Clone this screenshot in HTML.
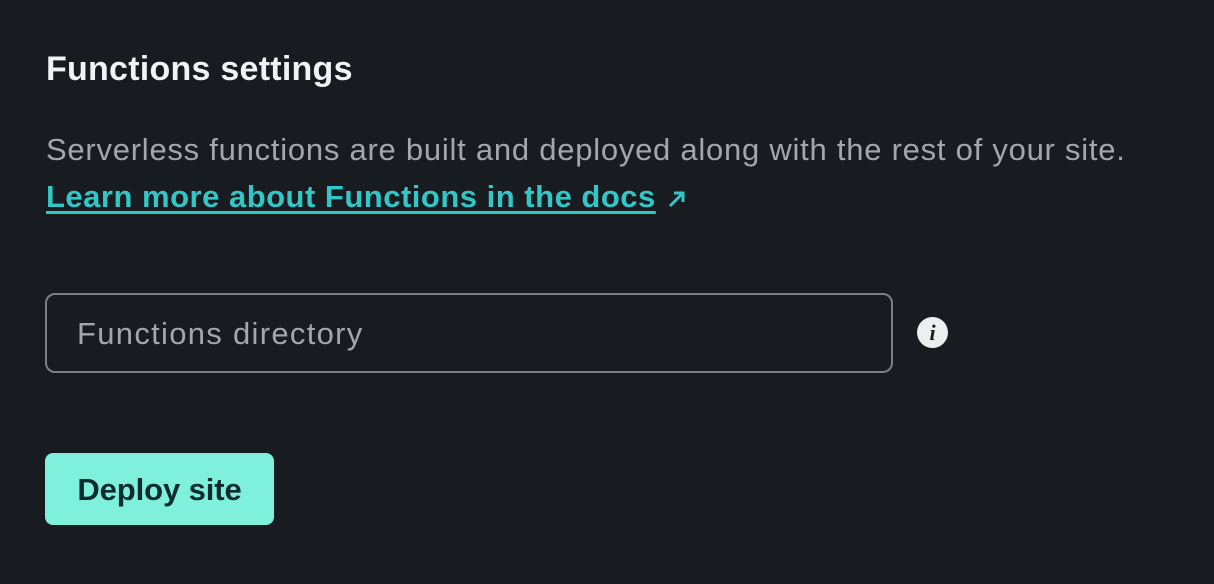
<!DOCTYPE html>
<html><head><style>
body{margin:0;background:#181b20;width:1214px;height:584px;overflow:hidden;font-family:"Liberation Sans",sans-serif;position:relative}
h2{position:absolute;left:46px;top:50px;margin:0;font-size:34px;font-weight:bold;color:#f0f2f4;letter-spacing:0.25px}
.p{position:absolute;left:46px;top:132px;font-size:31px;color:#a3a7ad;white-space:nowrap;letter-spacing:0.75px}
.a{position:absolute;left:46px;top:179px;font-size:31px;font-weight:bold;color:#32c7c7;text-decoration:underline;text-decoration-thickness:3px;text-underline-offset:4px;white-space:nowrap;letter-spacing:0.5px}
.arr{position:absolute;left:666px;top:188px}
.in{position:absolute;left:45px;top:293px;width:844px;height:76px;border:2px solid #7a7f86;border-radius:10px}
.in span{position:absolute;left:30px;top:21px;font-size:31px;color:#a3a7ad;letter-spacing:1.3px}
.i{position:absolute;left:917px;top:317px;width:31px;height:31px;border-radius:50%;background:#eceef0;color:#181b20;font:italic bold 22px "Liberation Serif",serif;text-align:center;line-height:31px}
.b{position:absolute;left:45px;top:453px;width:229px;height:72px;background:#7ff0dc;border-radius:8px;color:#0e2b2f;font-size:31px;font-weight:bold;text-align:center;line-height:74px;letter-spacing:-0.1px}
</style></head><body>
<h2>Functions settings</h2>
<div class="p">Serverless functions are built and deployed along with the rest of your site.</div>
<div class="a">Learn more about Functions in the docs</div>
<svg class="arr" width="22" height="22" viewBox="0 0 22 22"><path d="M4 18L17 5M8 5H17V14" stroke="#32c7c7" stroke-width="3" fill="none"/></svg>
<div class="in"><span>Functions directory</span></div>
<div class="i">i</div>
<div class="b">Deploy site</div>
</body></html>
